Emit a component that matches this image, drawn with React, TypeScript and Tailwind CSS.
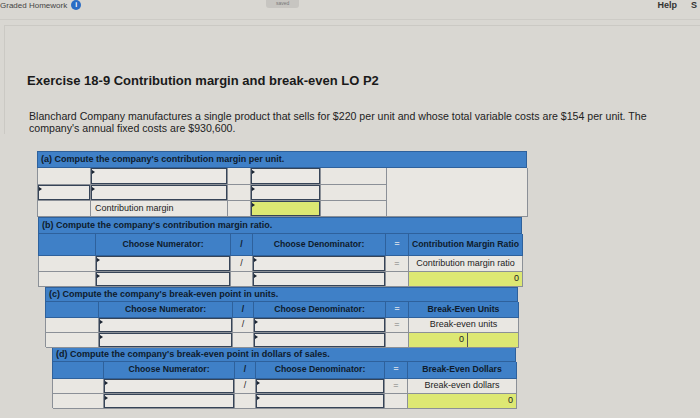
import React from "react";

const B = "border-r border-b border-[#8b9097]";

function Inp({ yellow = false, children }: { yellow?: boolean; children?: React.ReactNode }) {
  return (
    <div className={"relative h-full border-[1.5px] border-[#364457] flex items-center justify-end pr-[3px] text-[9px] text-[#222] " + (yellow ? "bg-[#dde873]" : "bg-[#ebe9e5]")}>
      <span className="absolute left-0 top-[1px] w-0 h-0 border-t-[2px] border-b-[2px] border-l-[3px] border-t-transparent border-b-transparent border-l-[#1a2330]" />
      {children}
    </div>
  );
}

function Plain({ children, className = "" }: { children?: React.ReactNode; className?: string }) {
  return <div className={B + " bg-[#e9e7e2] flex items-center text-[9px] text-[#222] " + className}>{children}</div>;
}

function Box({ children, className = "" }: { children?: React.ReactNode; className?: string }) {
  return <div className={B + " " + className}>{children}</div>;
}

function HeaderBar({ text, h }: { text: string; h: string }) {
  return (
    <div className={"bg-[#3f80c7] border border-[#2e619c] text-[#0e1b2c] font-bold text-[9px] px-[3px] flex items-center " + h}>
      {text}
    </div>
  );
}

function ColHead({ cols, h, result }: { cols: string; h: string; result: string }) {
  const c = "bg-[#3f80c7] border-r border-b border-[#2e619c] flex items-center justify-center font-bold text-[8.7px] text-[#0e1b2c] whitespace-nowrap";
  return (
    <div className={"grid border-l border-[#2e619c] " + cols + " " + h}>
      <div className={c} />
      <div className={c}>Choose Numerator:</div>
      <div className={c}>/</div>
      <div className={c}>Choose Denominator:</div>
      <div className={c + " text-[#c9d6e6]"}>=</div>
      <div className={c}>{result}</div>
    </div>
  );
}

function RatioTable({
  ml, cols, hh, ch, r1, r2, title, result, label, split,
}: {
  ml: string; cols: string; hh: string; ch: string; r1: string; r2: string;
  title: string; result: string; label: string; split?: boolean;
}) {
  return (
    <div className={ml}>
      <HeaderBar text={title} h={hh} />
      <ColHead cols={cols} h={ch} result={result} />
      <div className={"grid border-l border-[#8b9097] " + cols + " " + r1}>
        <Plain />
        <Box><Inp /></Box>
        <Plain className="justify-center text-[#8a3b3b]">/</Plain>
        <Box><Inp /></Box>
        <Plain className="justify-center text-[#777]">=</Plain>
        <Plain className="justify-center text-[#2a2a2a]">{label}</Plain>
      </div>
      <div className={"grid border-l border-[#8b9097] " + cols + " " + r2}>
        <Plain />
        <Box><Inp /></Box>
        <Plain />
        <Box><Inp /></Box>
        <Plain />
        {split ? (
          <div className={B + " flex bg-[#dde873]"}>
            <div className="w-[59px] border-r border-[#555] flex items-center justify-end pr-[3px] text-[9px] text-[#222]">0</div>
            <div className="flex-1" />
          </div>
        ) : (
          <div className={B + " bg-[#dde873] flex items-center justify-end pr-[3px] text-[9px] text-[#222]"}>0</div>
        )}
      </div>
    </div>
  );
}

export default function App() {
  return (
    <div className="w-[700px] h-[418px] overflow-hidden bg-[#d9d7d2] font-['Liberation_Sans',Arial,sans-serif] text-[#1c1c1c]">
      {/* top bar */}
      <div className="h-[20px] flex items-start border-b border-[#cdcbc6]">
        <div className="flex items-center ml-[0px]">
          <span className="text-[8px] leading-[9px] text-[#444]">Graded Homework</span>
          <span className="ml-[4px] w-[10px] h-[10px] rounded-full bg-[#2b6cc4] text-white text-[7px] font-bold flex items-center justify-center">i</span>
        </div>
        <div className="ml-[185px] w-[33px] h-[8px] rounded-b-[3px] bg-[#c7c5c1] text-[5px] leading-[6px] text-[#777] flex items-start justify-center">saved</div>
        <div className="ml-auto mr-[3px] flex items-center gap-[14px] text-[9px] font-bold text-[#333] -mt-[1px]">
          <span>Help</span>
          <span>S</span>
        </div>
      </div>

      <div className="ml-[4px] mt-[5px] border-l border-t border-[#cbc9c4] pt-[47px] pl-[22px]">
        <h1 className="text-[13px] leading-[16px] font-bold text-[#1a1a1a]">
          Exercise 18-9 Contribution margin and break-even LO P2
        </h1>
        <p className="mt-[21px] text-[10.6px] leading-[12px] text-[#222] w-[632px] pl-[2px]">
          Blanchard Company manufactures a single product that sells for $220 per unit and whose total variable costs are $154 per unit. The company's annual fixed costs are $930,600.
        </p>
      </div>

      {/* table a */}
      <div className="ml-[37px] mt-[17px] w-[490px]">
        <HeaderBar text="(a) Compute the company's contribution margin per unit." h="h-[17px]" />
        <div className="grid grid-cols-[53px_137px_23px_70px_66px_141px] grid-rows-[17px_16px_16px] border-l border-[#8b9097]">
          <Plain />
          <Box><Inp /></Box>
          <Plain />
          <Box><Inp /></Box>
          <Plain />
          <div className={B + " row-span-3 bg-[#e9e7e2]"} />
          <Box><Inp /></Box>
          <Box><Inp /></Box>
          <Plain />
          <Box><Inp /></Box>
          <Plain />
          <Plain />
          <Plain className="pl-[4px]">Contribution margin</Plain>
          <Plain />
          <Box><Inp yellow /></Box>
          <Plain />
        </div>
      </div>

      <RatioTable
        ml="ml-[38px] w-[484px]"
        cols="grid-cols-[57px_135px_22px_133px_23px_114px]"
        hh="h-[17px]" ch="h-[22px]" r1="h-[16px]" r2="h-[15px]"
        title="(b) Compute the company's contribution margin ratio."
        result="Contribution Margin Ratio"
        label="Contribution margin ratio"
      />
      <RatioTable
        ml="ml-[45px] w-[473px]"
        cols="grid-cols-[53px_134px_21px_132px_23px_110px]"
        hh="h-[15px]" ch="h-[16px]" r1="h-[15px]" r2="h-[14px]"
        title="(c) Compute the company's break-even point in units."
        result="Break-Even Units"
        label="Break-even units"
        split
      />
      <RatioTable
        ml="ml-[52px] w-[464px]"
        cols="grid-cols-[51px_131px_21px_129px_23px_109px]"
        hh="h-[15px]" ch="h-[17px]" r1="h-[15px]" r2="h-[14px]"
        title="(d) Compute the company's break-even point in dollars of sales."
        result="Break-Even Dollars"
        label="Break-even dollars"
      />
    </div>
  );
}
